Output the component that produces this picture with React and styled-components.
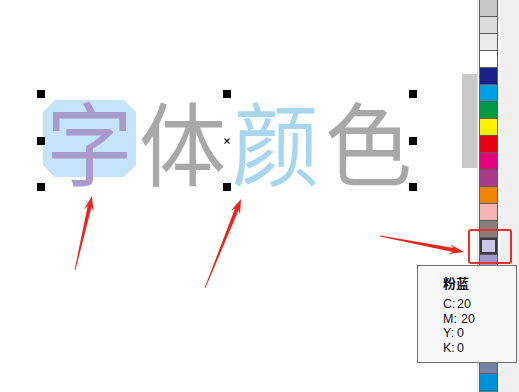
import React from 'react'
import styled, { createGlobalStyle } from 'styled-components'

const GlobalStyle = createGlobalStyle`
  html, body {
    margin: 0;
    padding: 0;
    background: #fff;
    overflow: hidden;
  }
`

const Root = styled.div`
  position: relative;
  width: 519px;
  height: 392px;
  display: flex;
  overflow: hidden;
  font-family: "Noto Sans CJK SC", sans-serif;
`

const Canvas = styled.div`
  position: relative;
  flex: 0 0 462px;
  background: #fff;
`

const ScrollTrack = styled.div`
  flex: 0 0 15px;
  padding-top: 74px;
  border-right: 1px solid #dcdcdc;
  margin-right: 1px;
`

const ScrollThumb = styled.div`
  height: 94px;
  background: #c9c9c9;
`

const Palette = styled.div`
  flex: 0 0 17px;
  display: flex;
  flex-direction: column;
  border-left: 1px solid #5c5c5c;
  border-right: 1px solid #5c5c5c;
`

const Swatch = styled.div`
  flex: 0 0 16px;
  background: ${p => p.$color};
  border-bottom: 1px solid #5c5c5c;
  box-shadow: ${p => (p.$selected ? 'inset 0 0 0 2px #3a3a3a' : 'none')};
`

const SidePanel = styled.div`
  flex: 1;
  background: #f0f0f0;
  border-left: 2px solid #fafafa;
`

// 选中框
const Selection = styled.div`
  position: absolute;
  left: 41px;
  top: 94px;
  width: 372px;
  height: 93px;
  box-sizing: border-box;
  padding: 6px 0 0 2px;
  display: flex;
`

const Handle = styled.div`
  position: absolute;
  left: ${p => p.$x}%;
  top: ${p => p.$y}%;
  width: 8px;
  height: 8px;
  background: #000;
  transform: translate(-50%, -50%);
`

const CenterMark = styled.svg`
  position: absolute;
  left: 50%;
  top: 50%;
  width: 7px;
  height: 7px;
  transform: translate(-50%, -50%);
`

const Glyph = styled.div`
  position: relative;
  flex: 0 0 93px;
  height: 77px;
  display: flex;
  align-items: center;
  justify-content: center;
  color: ${p => p.$color};

  &::before {
    content: '';
    position: absolute;
    inset: 0;
    background: ${p => p.$bg || 'transparent'};
    clip-path: polygon(12px 0, calc(100% - 12px) 0, 100% 12px, 100% calc(100% - 12px),
      calc(100% - 12px) 100%, 12px 100%, 0 calc(100% - 12px), 0 12px);
  }
`

// 宋体比黑体更高，拉长一点
const GlyphText = styled.span`
  position: relative;
  display: inline-block;
  font-size: 87px;
  line-height: 1;
  transform: translateY(1px) scaleY(1.05);
`

const Overlay = styled.svg`
  position: absolute;
  left: 0;
  top: 0;
  width: 519px;
  height: 392px;
  pointer-events: none;
`

const RedBox = styled.div`
  position: absolute;
  left: 468px;
  top: 229px;
  width: 44px;
  height: 35px;
  box-sizing: border-box;
  border: 2px solid #e5332a;
  border-radius: 3px;
`

const Tooltip = styled.div`
  position: absolute;
  left: 417px;
  top: 265px;
  width: 100px;
  height: 98px;
  box-sizing: border-box;
  border: 1px solid #707070;
  background: #f8f8f8;
  padding: 9px 0 0 25px;
  color: #111;
`

const TipTitle = styled.div`
  font-size: 13px;
  font-weight: 700;
  line-height: 16px;
  margin-bottom: 6px;
`

const TipLine = styled.div`
  display: flex;
  font-family: "Liberation Sans", Arial, sans-serif;
  font-size: 12.5px;
  line-height: 14.5px;
`

const TipLabel = styled.span`
  flex: 0 0 ${p => p.$w}px;
`

const swatches = [
  '#c8c8c8', '#dcdcdc', '#ebebeb', '#ffffff', '#1d2088', '#00a0e9',
  '#009944', '#fff100', '#e60012', '#e4007f', '#a93b8b', '#f08300',
  '#f5b5b5', '#8c7b78', '#cac8e6', '#a096cc', '#8c82be', '#6c6cac',
  '#4c5cac', '#5a6a9a', '#6878a0', '#7282a8', '#0091db', '#00a0e9'
]

const handles = [
  [0, 0], [50, 0], [100, 0],
  [0, 50], [100, 50],
  [0, 100], [50, 100], [100, 100]
]

const glyphs = [
  { ch: '字', color: '#a89bcb', bg: '#c6e4f9' },
  { ch: '体', color: '#a8a8a8' },
  { ch: '颜', color: '#a9d6ef' },
  { ch: '色', color: '#a8a8a8' }
]

const cmyk = [
  ['C:', 20, 14],
  ['M:', 20, 18],
  ['Y:', 0, 14],
  ['K:', 0, 14]
]

const arrows = [
  [75, 270, 92, 196],
  [205, 288, 241, 199],
  [380, 236, 464, 252]
]

// 细尾粗头的箭头
const arrowPoints = (x1, y1, x2, y2) => {
  const dx = x2 - x1
  const dy = y2 - y1
  const len = Math.hypot(dx, dy)
  const ux = dx / len
  const uy = dy / len
  const nx = -uy
  const ny = ux
  const headLen = 15
  const bx = x2 - ux * headLen
  const by = y2 - uy * headLen
  const nb = x2 - ux * (headLen - 4)
  const nby = y2 - uy * (headLen - 4)
  const pts = [
    [x1 + nx * 0.4, y1 + ny * 0.4],
    [nb + nx * 2, nby + ny * 2],
    [bx + nx * 5, by + ny * 5],
    [x2, y2],
    [bx - nx * 5, by - ny * 5],
    [nb - nx * 2, nby - ny * 2],
    [x1 - nx * 0.4, y1 - ny * 0.4]
  ]
  return pts.map(p => p.map(v => v.toFixed(1)).join(',')).join(' ')
}

export default function App () {
  return (
    <Root>
      <GlobalStyle />
      <Canvas>
        <Selection>
          {glyphs.map(g => (
            <Glyph key={g.ch} $color={g.color} $bg={g.bg}>
              <GlyphText>{g.ch}</GlyphText>
            </Glyph>
          ))}
          {handles.map(([x, y]) => <Handle key={x + '-' + y} $x={x} $y={y} />)}
          <CenterMark viewBox="0 0 7 7">
            <path d="M1 1L6 6M6 1L1 6" stroke="#222" strokeWidth="1.4" />
          </CenterMark>
        </Selection>
      </Canvas>
      <ScrollTrack>
        <ScrollThumb />
      </ScrollTrack>
      <Palette>
        {swatches.map((c, i) => <Swatch key={i} $color={c} $selected={i === 14} />)}
      </Palette>
      <SidePanel />

      <RedBox />
      <Tooltip>
        <TipTitle>粉蓝</TipTitle>
        {cmyk.map(([k, v, w]) => (
          <TipLine key={k}>
            <TipLabel $w={w}>{k}</TipLabel>
            <span>{v}</span>
          </TipLine>
        ))}
      </Tooltip>
      <Overlay viewBox="0 0 519 392">
        {arrows.map((a, i) => (
          <polygon key={i} points={arrowPoints(...a)} fill="#e8261c" />
        ))}
      </Overlay>
    </Root>
  )
}
